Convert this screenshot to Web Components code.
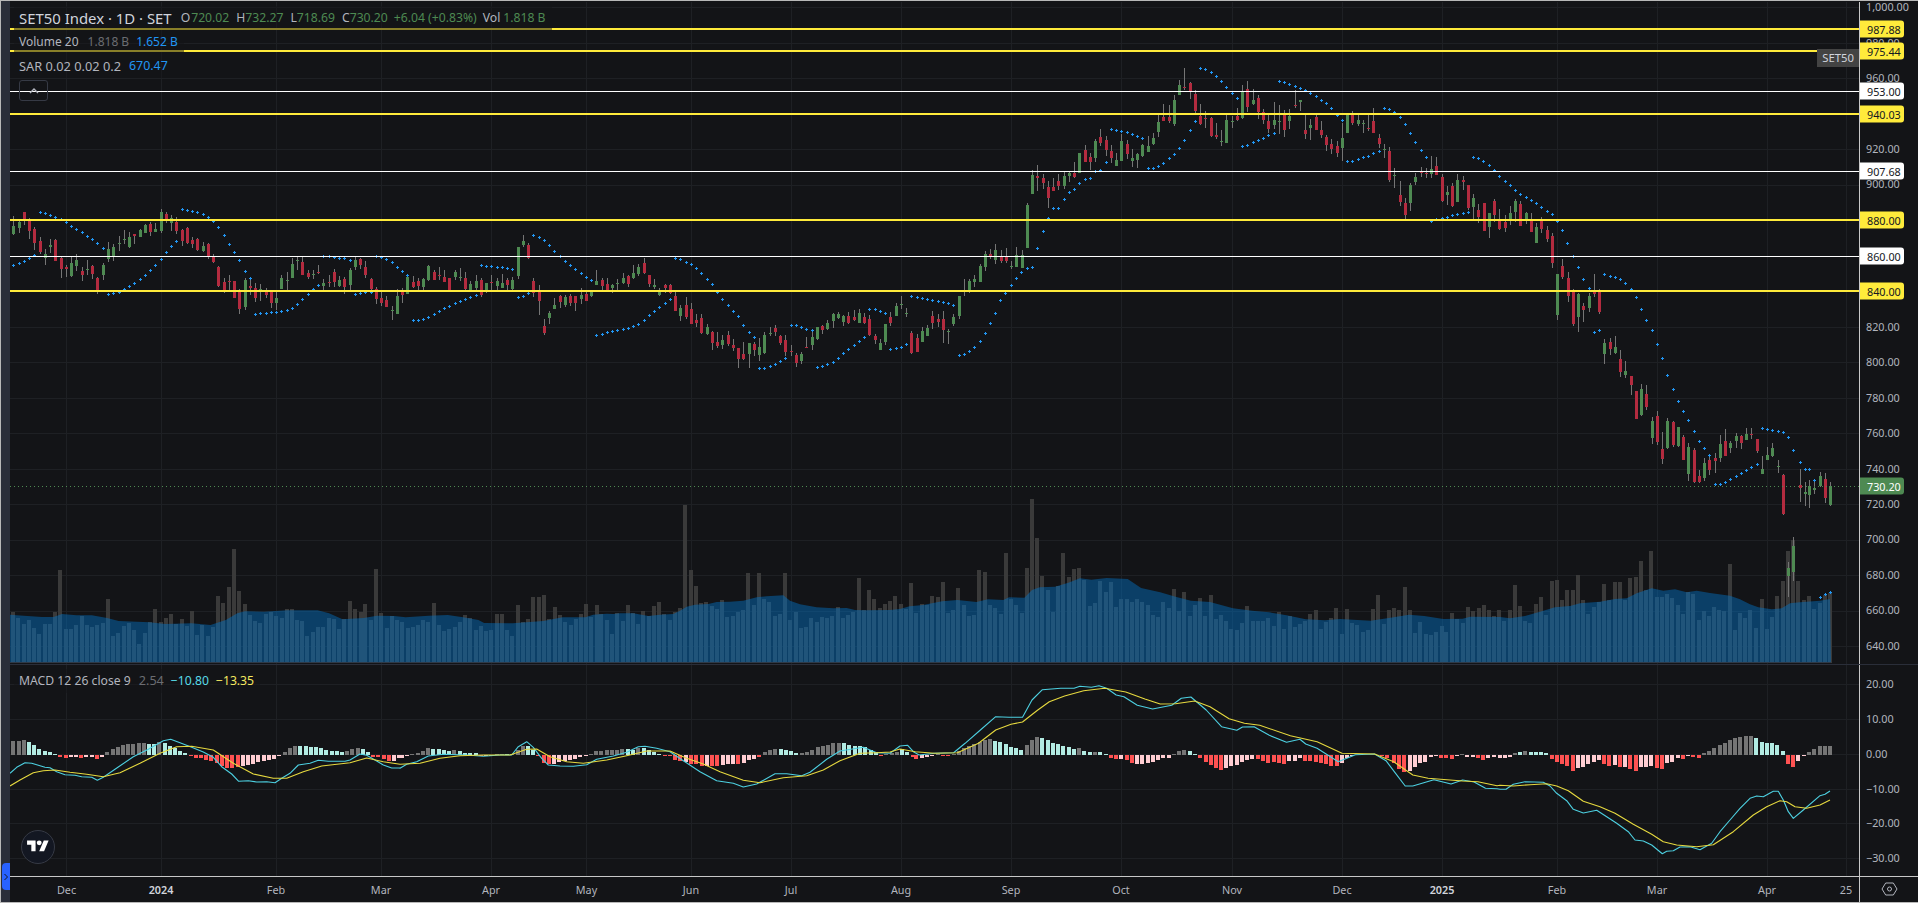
<!DOCTYPE html>
<html>
<head>
<meta charset="utf-8">
<title>SET50 Index</title>
<style>
  html, body { margin: 0; padding: 0; background: #131417; overflow: hidden; }
  body { font-family: "Noto Sans", sans-serif; }
</style>
</head>
<body>
<tv-chart>
  <tv-sidebar slot="side"></tv-sidebar>

  <tv-main-pane slot="main">
    <tv-legend>
      <tv-row>
        <tv-val tone="title" size="14.9">SET50 Index · 1D · SET</tv-val>
        <tv-val gap="9">O</tv-val><tv-val tone="green" gap="1">720.02</tv-val>
        <tv-val gap="7">H</tv-val><tv-val tone="green">732.27</tv-val>
        <tv-val gap="7">L</tv-val><tv-val tone="green">718.69</tv-val>
        <tv-val gap="7">C</tv-val><tv-val tone="green">730.20</tv-val>
        <tv-val gap="6" tone="green">+6.04 (+0.83%)</tv-val>
        <tv-val gap="6">Vol</tv-val><tv-val gap="3" tone="green">1.818 B</tv-val>
      </tv-row>
      <tv-row>
        <tv-val tone="label" size="12">Volume 20</tv-val>
        <tv-val gap="9" tone="grey" size="12">1.818 B</tv-val>
        <tv-val gap="7" tone="blue" size="12">1.652 B</tv-val>
      </tv-row>
      <tv-row>
        <tv-val tone="label" size="12.8">SAR 0.02 0.02 0.2</tv-val>
        <tv-val gap="8" tone="blue" size="12.4">670.47</tv-val>
      </tv-row>
      <tv-collapse></tv-collapse>
    </tv-legend>
  </tv-main-pane>

  <tv-price-scale slot="main-scale" top="2" height="662"></tv-price-scale>

  <tv-macd-pane slot="macd">
    <tv-legend>
      <tv-row>
        <tv-val tone="label">MACD 12 26 close 9</tv-val>
        <tv-val gap="8" tone="grey" size="12.6">2.54</tv-val>
        <tv-val gap="7" tone="teal">−10.80</tv-val>
        <tv-val gap="7" tone="yellow">−13.35</tv-val>
      </tv-row>
    </tv-legend>
    <tv-logo></tv-logo>
  </tv-macd-pane>

  <tv-price-scale slot="macd-scale" top="665" height="211" kind="macd"></tv-price-scale>

  <tv-time-scale slot="time"></tv-time-scale>
  <tv-scale-settings slot="corner"></tv-scale-settings>
</tv-chart>

<script>
const VLINES = [66.5, 161, 276, 381, 491, 586.5, 691, 791, 901, 1011, 1121, 1232, 1342, 1442, 1557, 1657, 1767, 1846];
const GRID_MAIN = [7, 43, 78, 114, 149, 185, 220, 256, 291, 327, 362, 398, 433, 469, 504, 540, 575, 611, 646];
const GRID_MACD = [684, 719, 754, 789, 823, 858];

// drawings on the price scale: [y, label, kind]
const HLINES = [
  [29, '987.88', 'y'], [51, '975.44', 'y'], [91, '953.00', 'w'], [114, '940.03', 'y'],
  [171, '907.68', 'w'], [220, '880.00', 'y'], [256, '860.00', 'w'], [291, '840.00', 'y']
];

// candles were read from crops: [left, top, scale, "colour x,wickTop,bodyTop,bodyBottom,wickBottom ..."]
const CANDLES = [
  [0, 180, 3, `g40,108,138,162,166 g58,120,125,144,158 r73,96,96,122,134 r88,115,122,152,177 r103,140,148,188,210 r121,170,183,216,222 g136,207,222,234,255 g151,177,195,201,220 r166,178,180,243,244 r184,232,234,267,294 r199,255,261,267,290 g214,230,249,287,291 g229,222,240,258,273 r247,262,273,285,303 g262,240,267,270,285 r277,256,258,282,297 r292,292,294,331,342 g310,250,255,285,300 g325,186,207,237,247 g340,193,201,229,243 g358,168,189,191,212 g373,151,177,179,192 g388,155,171,201,203 r403,162,162,168,192 g421,148,150,171,171 g436,132,135,159,160 r451,126,132,156,167 g466,128,147,156,157 g484,87,96,153,158 r499,95,102,120,128 g514,105,114,129,153 r529,112,126,153,162 r547,147,150,183,198 r562,141,144,189,192 r577,170,180,192,204 r592,173,177,210,212 g610,186,198,213,216 r625,189,192,229,237 r640,222,228,246,249 r655,258,261,318,321 r673,294,306,333,339 r688,285,303,306,334 r703,303,303,354,354 r718,327,330,387,402 g736,295,300,381,390 r751,291,318,324,345 r766,309,324,354,366 g781,312,326,329,363 r799,324,333,345,354 r814,333,335,369,384 g829,333,354,369,390 g844,285,294,327,327 g862,276,300,303,330 g877,234,252,294,294 g892,228,240,243,270 r907,228,246,285,285 r925,270,279,291,297 g940,270,282,285,297 r955,255,276,279,282 g970,297,309,318,330 r988,285,306,309,321 r1003,267,276,306,321 g1018,288,300,318,321 r1033,291,297,321,342 g1051,264,270,315,330 g1066,228,240,261,270 r1081,234,237,255,267 r1096,243,261,285,294 r1114,294,297,327,330 r1129,321,327,357,372 r1144,333,354,369,378 r1159,348,360,381,381 g1177,378,390,393,420 g1192,327,348,402,402 r1207,324,333,345,369 g1222,288,291,342,342 r1240,288,306,321,324 r1255,294,303,318,336 g1270,294,297,321,330 g1285,255,258,299,303 r1303,270,276,300,300 r1318,261,285,288,300 r1333,270,291,306,306 r1348,294,294,330,333 g1366,270,276,291,300 g1381,264,291,294,303 r1396,276,294,327,330 g1411,303,312,330,336 g1429,285,303,324,330 r1444,294,300,345,351 g1459,309,309,336,339 r1474,285,306,309,330 g1492,294,303,318,330`],
  [500, 180, 3, `g7,282,309,324,324 r22,294,300,315,333 g37,291,300,327,333 g55,201,201,288,297 g70,165,183,195,201 r85,189,195,234,237 r100,294,303,339,351 r118,315,333,363,405 r133,417,438,459,465 g148,393,399,414,432 g163,354,375,387,387 r181,345,348,366,384 g196,345,351,375,380 r211,342,348,369,378 r226,348,348,369,393 g244,324,345,357,372 r259,330,342,363,363 g274,330,333,348,351 g289,270,303,315,315 r307,294,300,318,333 r322,294,312,330,333 g337,312,315,324,339 g352,297,309,312,333 g370,279,294,309,312 r385,285,288,312,321 g400,255,279,294,297 g415,252,261,282,288 r433,234,249,279,282 r448,285,285,312,321 g463,297,315,321,327 g478,324,333,345,348 r496,312,315,324,339 r511,312,315,339,342 r526,333,348,393,393 g541,375,384,408,423 r559,351,375,411,417 r574,369,387,432,432 r589,402,420,429,441 r604,402,414,459,462 g622,432,441,462,465 r637,453,456,489,510 r652,456,486,498,504 g667,465,480,495,507 r685,453,465,492,498 r700,477,495,504,513 r715,504,504,537,564 r730,486,522,537,540 g748,489,489,522,564 r763,486,492,510,528 g778,474,501,525,543 g793,456,465,519,522 g811,441,459,462,468 r826,435,444,456,468 r841,465,468,489,495 r856,465,480,516,528 r874,495,513,516,528 r889,519,525,549,561 g904,516,522,543,552 r919,471,501,504,504 g937,456,471,495,510 g952,441,441,477,480 r967,435,438,450,462 g982,420,429,447,450 g1000,399,402,423,444 g1015,396,402,414,417 g1030,405,408,426,438 r1045,396,408,429,432 r1063,390,411,420,423 g1078,387,399,429,429 r1093,399,411,429,432 r1108,405,417,465,468 r1126,462,468,480,492 g1141,477,489,510,510 g1156,432,432,486,495 r1171,396,411,429,438 g1189,369,378,408,408 g1204,348,372,375,387 g1219,384,399,402,411 r1234,453,459,519,522 r1252,462,474,516,516 g1267,441,453,486,486 g1282,435,444,468,468 r1297,393,408,429,447 r1315,402,417,426,441 r1330,393,417,450,489 g1345,447,453,456,492 g1360,402,411,432,438 g1378,348,348,408,417 g1393,297,330,333,348 g1408,297,303,336,339 g1423,285,297,306,321 g1441,252,258,306,306 g1456,213,222,261,273 r1471,207,222,231,237 g1486,192,210,240,252`],
  [950, 50, 3, `r154,600,621,633,640 r169,594,621,633,640 g184,633,648,651,657 g199,591,615,651,651 g217,600,615,654,654 g232,460,465,594,594 g247,360,375,432,432 r262,345,378,384,423 r280,372,384,400,417 r295,393,411,444,474 r310,384,411,423,423 r325,372,393,408,420 g343,366,378,408,417 g358,363,369,378,396 r373,336,369,381,384 g388,309,309,369,369 r406,285,300,336,336 r421,309,321,336,360 g436,267,273,324,336 r451,237,261,279,288 r469,258,270,300,318 r484,285,303,324,339 g499,309,330,348,348 g514,252,273,333,333 r532,270,282,312,327 g547,297,324,333,351 g562,309,312,330,354 g577,282,285,318,321 g595,258,288,306,306 g610,249,264,282,285 g625,189,216,246,261 r640,162,201,213,213 r658,165,201,213,219 g673,135,150,222,228 g688,90,105,135,135 r703,54,111,114,120 r721,96,99,123,147 r736,120,132,183,195 r751,162,198,222,225 r766,183,204,207,234 r784,201,204,258,261 r799,219,255,261,267 g814,240,273,276,288 g829,192,210,279,279 g847,198,213,216,234 r862,174,198,210,213 g877,105,126,204,207 r892,93,117,171,186 g910,117,150,162,165 r925,135,144,186,207 r940,177,186,210,222 r955,192,213,237,249 g973,156,210,225,237 g988,165,213,216,252 r1003,180,192,240,261 g1018,177,198,213,237 r1036,120,165,168,174 g1051,150,150,156,183 r1066,192,240,252,267 g1081,207,225,234,270 r1099,189,201,240,240 r1114,213,240,255,264 r1129,255,261,285,303 r1144,267,282,297,312 r1162,273,288,309,321 g1177,219,264,294,333 g1192,189,192,249,249 r1207,183,195,219,225 g1225,192,210,222,228 g1240,210,219,222,249 r1255,192,234,237,243 r1270,174,213,249,249 r1288,252,264,282,294 g1303,282,297,300,324 r1318,291,303,390,396 g1333,354,375,378,414 r1351,393,435,456,468 r1366,444,459,495,510 g1381,399,405,459,483 g1396,369,381,396,405 r1414,351,366,369,381 r1429,354,369,372,384 g1444,318,357,372,384 r1459,321,348,375,375 r1477,372,381,453,456 g1492,408,426,435,465`],
  [1440, 170, 3, `r37,39,48,108,111 g52,12,30,96,96 r70,18,30,36,60 r85,45,45,114,120 g100,72,84,111,150 r115,102,120,141,159 r133,99,99,183,183 g148,129,129,171,204 r163,87,93,135,156 r178,117,150,177,180 r196,135,156,174,186 g211,108,129,150,165 g226,87,93,126,156 r241,93,102,168,168 g259,126,129,147,162 r274,129,150,186,186 g289,159,171,219,219 r304,141,147,177,189 r322,168,180,207,216 r337,189,198,279,294`],
  [1500, 250, 3, `g172,72,72,195,210 r187,27,48,81,87 r205,66,84,138,156 r220,117,123,222,228 g235,129,132,201,246 r250,159,168,180,216 g268,129,138,174,186 r283,72,120,132,141 r298,117,120,186,192 g313,267,279,312,342 r331,264,276,297,315 g346,258,291,309,312 r361,300,327,366,381 g376,333,363,375,384 r394,378,378,405,435 r409,423,423,507,507 g424,402,417,495,498 r439,405,432,471,480 g457,501,513,564,582 r472,483,498,576,585 r487,546,597,627,642 g502,504,513,594,597 r520,513,516,585,591 g535,531,531,588,591 r550,555,561,630,630 g565,579,591,672,693 r583,594,600,696,699 r598,660,678,696,699 g613,624,639,684,693 r628,615,630,660,675 r646,609,624,633,669 g661,555,582,624,636 r676,537,573,618,618 g691,573,579,594,609 g709,549,558,573,594 r724,555,558,579,597 g739,534,552,570,570 r754,534,552,555,567 r772,567,567,603,609 g787,618,657,672,672 g802,591,615,630,630 g817,579,594,618,621 g835,630,648,651,669 r850,672,675,792,795`],
  [1788.3, 0, 1, `g0,562,568,576,597 g5,537,546,572,581`],
  [1500, 250, 3, `r899,657,705,714,756 g914,696,726,732,768 g928,690,708,735,774 g943,690,714,720,732 g961,666,678,708,711 r976,669,687,744,759 g991,696,708,765,768`]
];

// parabolic sar: [left, top, scale, "x,y x,y ..."]
const SAR = [
  [0, 180, 3, `40,256 58,250 73,244 88,235 103,226 121,97 136,100 151,106 166,112 184,118 199,127 214,139 229,148 247,157 262,169 277,178 292,190 310,205 325,343 340,340 358,337 373,328 388,319 403,310 421,298 436,286 451,271 466,256 484,238 499,217 514,199 529,184 547,88 562,91 577,94 592,97 610,103 625,112 640,124 655,142 673,166 688,193 703,217 718,241 736,274 751,295 766,403 781,400 799,400 814,397 829,397 844,394 862,391 877,385 892,373 907,358 925,343 940,328 955,316 970,229 988,229 1003,232 1018,235 1033,235 1051,241 1066,343 1081,340 1096,337 1114,337 1129,229 1144,232 1159,238 1177,247 1192,262 1207,274 1222,286 1240,421 1255,421 1270,418 1285,412 1303,403 1318,394 1333,385 1348,379 1366,370 1381,364 1396,358 1411,352 1429,346 1444,256 1459,259 1474,259 1492,262`],
  [500, 180, 3, `7,262 22,265 37,268 55,352 70,349 85,340 100,166 118,172 133,181 148,196 163,214 181,229 196,244 211,256 226,268 244,280 259,292 274,301 289,466 307,463 322,457 337,454 352,451 370,448 385,445 400,439 415,433 433,421 448,406 463,394 478,382 496,370 511,358 526,235 541,238 559,247 574,253 589,265 604,280 622,298 637,313 652,337 667,358 685,376 700,394 715,409 730,436 748,457 763,472 778,565 793,565 811,559 826,553 841,544 856,535 874,436 889,436 904,442 919,448 937,451 952,562 967,559 982,553 1000,547 1015,535 1030,520 1045,508 1063,496 1078,484 1093,472 1108,388 1126,388 1141,394 1156,400 1171,508 1189,505 1204,502 1219,493 1234,349 1252,352 1267,355 1282,358 1297,361 1315,364 1330,367 1345,370 1360,376 1378,526 1393,523 1408,514 1423,502 1441,484 1456,460 1471,430 1486,400`],
  [0, 0, 1, `1000,300 1005,293 1011,285 1016,278 1021,272`],
  [950, 50, 3, `232,655 247,652 262,595 280,544 295,505 310,475 325,475 343,448 358,427 373,418 388,400 406,388 421,385 436,364 451,361 469,337 484,238 499,241 514,244 532,247 547,253 562,259 577,265 595,355 610,355 625,349 640,340 658,325 673,313 688,295 703,271 721,241 736,214 751,55 766,58 784,67 799,79 814,94 829,112 847,130 862,145 877,289 892,286 910,277 925,271 940,265 955,256 973,250 988,94 1003,97 1018,103 1036,109 1051,115 1066,121 1081,130 1099,139 1114,151 1129,160 1144,175 1162,195 1177,211 1192,334 1207,334 1225,328 1240,322 1255,319 1270,310 1288,304 1303,175 1318,178 1333,187 1351,202 1366,223 1381,250 1396,277 1414,301 1429,322 1444,514 1459,507 1477,505 1492,502`],
  [1440, 170, 3, `37,136 52,133 70,130 85,127`],
  [0, 0, 1, `1473,157 1478,158 1483,161 1489,165`],
  [1440, 170, 3, `163,0 178,19 196,34 211,46 226,61 241,73 259,82 274,91 289,100 304,112 322,124 337,133 352,154`],
  [0, 0, 1, `1562,230 1567,243`],
  [1500, 250, 3, `220,18 235,52 250,88 268,115 283,247 298,241 313,73 331,79 346,82 361,88 376,100 394,118 409,142 424,178 439,211 457,241 472,283 487,325 502,376 520,418 535,454 550,484 565,511 583,544 598,574 613,595 628,616 646,703 661,703 676,697 691,688 709,679 724,670 739,661 754,652 772,643 787,535 802,538 817,541 835,544 850,547 865,562 880,601 899,637 914,658 928,658 943,691`],
  [1500, 550, 3, `961,142 976,133 991,127`]
];

// volume tops: [left, top, scaleX, scaleY, "x,y ..."]
const VOLUME = [
  [0, 480, 2.613, 3, `34,396 48,414 62,432 76,420 89,444 103,462 117,432 131,432 144,396 158,270 172,447 186,447 199,435 213,408 227,435 240,441 254,435 268,429 282,357 296,468 309,459 324,438 337,429 351,450 364,492 379,459 392,426 405,387 420,426 434,414 447,402 461,432 475,417 488,438 502,393 515,465 529,435 543,468 556,441 570,348 584,369 598,321 612,207 625,333 639,372 653,405 667,423 680,429 694,402 708,396 722,408 736,414 749,387 763,387 776,420 790,423 803,468 818,456 832,441 845,441 859,414 873,417 886,447 900,417 914,363 928,387 942,396 955,372 969,420 983,267 996,399 1010,444 1024,408 1038,420 1051,426 1065,444 1079,441 1092,435 1106,420 1119,426 1133,369 1147,435 1161,453 1174,447 1188,441 1202,426 1216,405 1229,414 1243,450 1257,438 1270,453 1284,450 1298,402 1312,402 1325,450 1339,468 1353,375 1367,426 1380,417 1394,351 1408,351 1422,345 1435,417 1449,381 1463,405 1477,426 1491,435 1504,417 1518,402 1532,372 1545,411 1559,375`],
  [400, 490, 3, 3, `603,372 620,390 636,432 652,368 668,392 684,345 700,368 714,402 730,363 746,378 762,348 777,336 793,372 809,390 825,366 840,354 856,45 873,240 888,288 903,340 919,336 935,348 951,357 966,330 982,381 998,378 1014,366 1030,360 1045,249 1061,345 1077,249 1092,327 1108,336 1124,378 1140,372 1155,249 1171,390 1187,366 1203,414 1219,411 1234,384 1250,396 1266,381 1281,384 1297,378 1313,351 1329,384 1344,375 1360,366 1377,264 1392,360 1407,300 1423,327 1439,354 1455,342 1470,333 1486,318 1503,342`],
  [900, 480, 2.613, 3, `15,387 29,309 43,399 57,372 71,375 84,348 98,351 112,306 125,399 139,390 152,324 166,375 180,408 194,405 207,270 221,276 235,375 249,384 263,402 277,219 290,357 304,375 318,399 332,264 345,57 358,174 372,288 386,330 400,396 413,318 427,219 441,291 455,267 468,264 482,300 496,378 510,369 523,303 537,336 551,306 564,381 578,357 592,357 606,366 620,357 633,366 647,375 660,405 674,411 688,366 702,385 716,327 730,393 743,336 757,408 771,375 784,354 798,408 812,345 826,417 840,405 853,423 866,447 880,450 894,429 908,378 922,423 935,423 949,423 962,414 976,438 990,396 1004,447 1018,408 1031,441 1045,432 1059,423 1072,402 1086,390 1100,447 1113,426 1127,414 1140,384 1154,462 1168,387 1182,429 1195,435 1209,456 1223,450 1237,387 1250,345 1264,432 1278,390 1291,384 1305,390 1319,321 1333,390 1346,459 1360,426 1374,462 1388,465 1401,456 1415,438 1428,456 1442,399 1456,417 1470,429 1484,381 1498,393 1512,384 1525,375 1539,390 1553,408 1565,390`],
  [1500, 550, 3, 3, `12,213 30,180 45,105 60,168 75,213 90,220 108,162 123,141 138,195 156,93 171,90 186,150 201,120 219,120 234,75 249,150 264,192 282,171 297,156 312,102 327,150 345,96 360,96 375,150 390,84 408,81 423,33 438,120 453,3 471,141 486,141 501,132 516,144 534,165 549,192 564,126 579,132 597,210 612,183 627,198 642,171 657,180 672,183 690,42 705,240 720,189 735,204 750,180 768,234 786,147 801,237 816,201 831,138 849,93 864,3 879,-30 894,93 912,150 927,138 942,177 960,159 975,135 990,128`]
];

const VOL_MA = [
  [0, 480, 2.613, 3, `26,404 62,407 110,411 140,411 162,402 200,406 240,406 280,414 310,423 390,427 432,432 500,430 550,435 590,420 620,400 640,394 690,395 750,391 830,391 860,400 895,418 950,414 985,407 1030,408 1060,412 1120,407 1170,405 1210,412 1250,420 1265,429 1340,430 1420,423 1470,412 1530,412 1550,404`],
  [400, 490, 3, 3, `620,371 640,372 660,370 700,370 745,378 780,374 820,372 840,362 860,350 885,344 925,342 950,336 990,335 1030,332 1070,322 1100,319 1150,316 1170,332 1200,343 1250,352 1300,355 1340,354 1365,360 1395,361 1470,360`],
  [900, 480, 2.613, 3, `0,387 25,379 60,375 110,364 150,360 200,366 230,358 270,360 285,352 325,353 345,330 365,322 405,320 440,308 470,295 500,299 540,294 595,297 630,324 680,337 720,350 760,362 810,366 870,385 920,392 965,397 1010,406 1060,418 1110,421 1150,417 1230,422 1290,412 1330,404 1370,408 1420,417 1470,416 1490,410 1560,411`],
  [1500, 550, 3, 3, `0,201 30,205 75,198 120,185 165,172 210,168 240,160 300,155 345,147 380,145 410,130 455,115 490,122 525,118 560,127 590,122 630,129 690,137 720,148 750,163 775,172 815,178 845,175 870,160 900,157 960,152 990,147`]
];

// macd histogram: [left, scaleX, scaleY, "colour x,height ..."]  g grey, t teal, r red, p pink
const HIST = [
  [0, 3, 3, `g40,43 g56,43 g72,45 t87,39 t103,29 t118,18 t134,12 t150,8 t165,3 r181,-7 r197,-8 p212,-6 p228,-7 r243,-8 p259,-6 p275,-7 r291,-13 p306,-6 g322,8 g338,18 g353,23 g369,30 g385,33 g400,33 g416,36 g431,36 t447,34 t463,34 g478,38 t494,35 t510,28 t525,20 t541,12 t556,6 r572,-3 r588,-8 r603,-10 r619,-15 r634,-18 r650,-25 r666,-33 r681,-38 r697,-40 r713,-37 p729,-33 p744,-30 p760,-26 p775,-22 p791,-17 p807,-16 p823,-12 p838,-4 g854,8 g870,20 g885,27 t901,27 t917,26 t932,25 t948,24 t963,20 t979,16 t995,13 t1010,12 t1026,10 g1042,13 g1057,17 g1073,21 t1088,19 t1104,10 r1120,-5 r1135,-7 r1151,-13 r1167,-17 p1182,-18 p1198,-10`],
  [400, 3, 3, `p7,-10 p21,-3 g37,3 g53,6 g70,12 g85,21 t100,18 t116,19 t132,14 t148,11 g163,14 t180,11 t195,7 t211,5 t227,5 r243,-3 p258,-3 p273,-2 g290,2 g305,3 t321,2 g337,3 g353,15 g369,26 t385,27 t400,14 r415,-4 r432,-25 r447,-28 p463,-28 p478,-22 p494,-19 p510,-15 p525,-12 p541,-6 p557,-4 g573,1 g589,12 g604,13 g620,15 g636,15 g652,15 g667,18 t683,18 t699,16 g715,22 t731,22 t747,15 t762,9 t778,3 r794,-3 r810,-3 r826,-14 r841,-17 p857,-21 r873,-27 r889,-28 r905,-32 p920,-32 r936,-33 r952,-33 p968,-30 p984,-27 p1000,-26 r1015,-26 p1031,-24 p1047,-16 p1063,-12 r1078,-6 g1094,9 g1110,14 g1126,18 t1142,18 t1158,14 t1174,12 t1189,6 g1205,5 g1221,9 g1237,15 g1253,24 g1269,27 g1285,30 g1300,36 g1316,36 t1332,36 t1348,30 t1364,27 t1380,27 t1395,24 t1412,15 t1428,9 r1443,-3 g1459,3 g1475,5 g1490,9 t1506,17 t1522,10 r1538,-6`],
  [900, 2.613, 3, `r43,-11 p57,-8 p71,-5 p84,-3 g98,1 r112,-2 r125,-2 g140,3 g153,12 g167,22 g181,27 g194,33 g208,40 g222,45 g235,47 t248,43 t262,38 t276,33 t290,24 t303,21 t317,14 g331,30 g345,46 g358,54 t372,52 t386,44 t400,37 t413,32 t427,26 t441,24 t455,18 g468,21 t482,13 t496,10 g510,9 t523,9 t537,4 r551,-8 r564,-13 p578,-13 r592,-14 r606,-23 p620,-26 p633,-27 p647,-25 p660,-22 p674,-14 p688,-8 p702,-8 g716,3 g730,11 g743,14 t757,12 t771,3 r785,-10 r799,-20 r812,-31 r826,-38 r839,-45 p853,-38 p866,-34 p880,-29 p894,-20 p908,-14 p921,-12 r935,-11 r949,-17 r962,-23 r976,-22 r990,-23 r1003,-27 p1017,-19 p1031,-17 p1045,-9 r1058,-17 r1072,-17 r1086,-20 r1100,-23 r1113,-27 r1127,-32 r1141,-32 p1154,-24 p1168,-8 p1181,-3 r1260,-4 r1273,-10 r1290,-25 r1305,-42 r1318,-52 p1332,-47 p1346,-35 p1359,-23 p1373,-20 p1387,-6 p1400,-3 r1414,-8 r1428,-9 r1442,-13 p1455,-4 g1469,3 p1482,-5 p1496,-5 r1510,-8 r1524,-16 p1537,-8 p1551,-7`],
  [1500, 3, 3, `p0,-10 p15,-10 p30,-5 g45,7 t60,9 g75,11 t93,9 t108,8 t123,8 t138,5 r156,-11 r171,-20 r186,-26 r201,-32 r219,-47 p234,-40 p249,-37 p264,-28 p282,-20 p297,-15 r312,-26 r327,-32 p345,-29 r360,-35 p375,-37 r390,-43 r408,-47 p423,-37 p438,-35 p453,-34 r471,-38 r486,-42 p501,-25 p516,-21 p534,-8 r549,-11 p564,-2 r579,-7 r597,-10 g612,5 g627,12 g642,20 g660,30 g675,35 g690,46 g705,52 g720,54 g738,57 g753,58 t768,52 t786,40 t801,37 t816,36 t831,31 t849,11 r864,-27 r879,-36 p894,-19 p912,-4 g927,10 g942,17 g960,26 g975,26 g990,28`]
];

const MACD_LINE = [
  [0, 650, 3, 3, `30,370 50,352 75,338 95,340 135,352 150,353 170,365 195,374 225,376 245,380 275,382 292,391 310,382 345,358 400,320 445,298 490,272 512,268 540,278 575,292 610,306 640,322 665,350 695,372 716,394 745,392 770,396 800,395 825,398 845,385 870,370 895,345 930,340 955,331 985,334 1035,334 1050,330 1080,312 1100,316 1125,330 1150,345 1175,354 1200,354`],
  [400, 490, 3, 3, `0,835 20,823 50,815 85,798 130,793 200,795 250,799 300,795 335,795 355,770 380,755 400,772 425,805 445,825 480,828 520,829 560,824 590,808 640,798 680,787 715,770 735,769 770,775 810,785 850,812 900,845 950,872 1000,880 1030,891 1070,882 1125,851 1160,851 1205,857 1230,847 1280,808 1320,783 1390,772 1430,788 1470,790`],
  [900, 480, 2.613, 3, `0,798 20,796 35,815 50,825 90,820 140,818 170,790 210,750 250,710 285,712 320,712 345,660 372,629 420,625 455,625 470,619 500,622 520,617 540,625 565,645 585,650 620,676 660,687 710,676 735,655 760,651 800,690 840,740 880,751 895,741 925,740 965,766 1010,787 1045,778 1060,792 1090,805 1145,845 1190,824 1240,822 1270,842 1295,880 1320,918 1340,918 1395,899 1440,912 1470,900 1500,906 1530,925 1560,926`],
  [1500, 550, 3, 3, `0,718 18,718 40,703 75,695 130,697 150,708 170,730 200,752 220,778 250,789 290,781 320,800 350,820 385,845 405,870 430,873 455,885 487,911 500,904 520,902 540,891 570,890 600,899 635,880 660,845 690,810 720,775 750,745 770,738 790,740 820,724 835,724 850,750 865,785 880,805 910,780 960,737 975,733 990,723`]
];

const SIGNAL_LINE = [
  [0, 650, 3, 3, `30,408 60,390 100,368 130,362 165,360 210,367 260,373 310,380 360,368 420,340 480,310 530,290 575,289 640,300 700,340 760,372 820,385 860,385 910,365 965,348 1050,338 1100,324 1150,335 1200,343`],
  [400, 490, 3, 3, `0,823 60,820 120,805 180,797 250,795 330,795 380,778 410,777 450,800 500,815 550,820 620,810 680,797 740,783 810,783 860,805 910,822 960,845 1030,871 1080,878 1150,863 1220,857 1270,840 1320,812 1380,790 1430,788 1470,786`],
  [900, 480, 2.613, 3, `0,807 40,815 90,820 150,818 205,790 250,750 290,733 320,726 360,690 390,665 430,648 480,632 535,625 590,636 640,657 680,672 720,671 770,663 810,680 860,716 900,730 940,736 1020,767 1090,785 1155,820 1240,822 1290,845 1340,885 1380,895 1470,903 1510,905 1560,917`],
  [1500, 550, 3, 3, `0,706 40,708 90,704 140,701 170,708 205,722 250,754 300,770 345,790 400,823 455,853 490,875 530,885 590,890 640,884 700,845 760,795 800,770 840,752 860,755 885,770 920,775 960,765 990,750`]
];

const UP = '#4e8a52', DOWN = '#b32b3f', WICK = '#757575';
const HIST_COLORS = { g: '#757575', t: '#b2ebe2', r: '#ff5252', p: '#ffcdd2' };

function readPoints(sections) {
  const out = [];
  for (const [ox, oy, sx, sy, str] of sections) {
    for (const p of str.trim().split(/\s+/)) {
      const [a, b] = p.split(',').map(Number);
      out.push([ox + a / sx, oy + b / sy]);
    }
  }
  return out;
}

function gridSvg(x0, hs, y0, y1) {
  let s = '';
  for (const y of hs) s += `<rect x="10" y="${y}" width="1849" height="1" fill="#1e2024"/>`;
  for (const x of VLINES) s += `<rect x="${Math.floor(x)}" y="${y0}" width="1" height="${y1 - y0}" fill="#1e2024"/>`;
  return s;
}

function candlesSvg() {
  let s = '';
  for (const [ox, oy, k, str] of CANDLES) {
    for (const item of str.trim().split(/\s+/)) {
      const col = item[0] == 'g' ? UP : DOWN;
      const [xv, wt, bt, bb, wb] = item.slice(1).split(',').map(Number);
      const x = Math.round(ox + xv / k);
      const y = v => Math.round(oy + v / k);
      s += `<rect x="${x}" y="${y(wt)}" width="1" height="${Math.max(1, y(wb) - y(wt))}" fill="${WICK}"/>`;
      s += `<rect x="${x - 1}" y="${y(bt)}" width="3" height="${Math.max(1, y(bb) - y(bt))}" fill="${col}"/>`;
    }
  }
  return s;
}

function sarSvg() {
  let s = '';
  for (const [ox, oy, k, str] of SAR) {
    for (const p of str.trim().split(/\s+/)) {
      const [a, b] = p.split(',').map(Number);
      const x = Math.round(ox + a / k), y = Math.round(oy + b / k);
      s += `<path d="M${x - 1} ${y}h3v1h-3zM${x} ${y - 1}h1v3h-1z" fill="#2196f3"/>`;
    }
  }
  return s;
}

function volumeSvg() {
  let s = '';
  for (const [x, y] of readPoints(VOLUME)) {
    const px = Math.round(x), top = Math.round(y);
    s += `<rect x="${px - 2}" y="${top}" width="4" height="${663 - top}" fill="#3a3a3a"/>`;
  }
  const ma = readPoints(VOL_MA);
  const d = ma.map(p => p[0].toFixed(1) + ' ' + p[1].toFixed(1)).join(' L');
  s += `<path shape-rendering="auto" d="M10 663 L10 ${ma[0][1].toFixed(1)} L${d} L1831 663 Z" fill="rgba(2,115,199,.46)"/>`;
  s += `<rect x="10" y="662" width="1821" height="1" fill="#2f3a48"/>`;
  return s;
}

function histSvg() {
  let s = '';
  for (const [ox, sx, sy, str] of HIST) {
    for (const item of str.trim().split(/\s+/)) {
      const [a, h] = item.slice(1).split(',').map(Number);
      const x = Math.round(ox + a / sx) - 2;
      const px = Math.max(1, Math.round(Math.abs(h) / sy));
      const y = h > 0 ? 755 - px : 755;
      s += `<rect x="${x}" y="${y}" width="4" height="${px}" fill="${HIST_COLORS[item[0]]}"/>`;
    }
  }
  return s;
}

function lineSvg(sections, color) {
  const pts = readPoints(sections).map(p => p[0].toFixed(1) + ',' + p[1].toFixed(1)).join(' ');
  return `<polyline shape-rendering="auto" points="${pts}" fill="none" stroke="${color}" stroke-width="1.1" stroke-linejoin="round"/>`;
}

class TvChart extends HTMLElement {
  constructor() {
    super();
    this.attachShadow({ mode: 'open' });
    this.shadowRoot.innerHTML = `
      <style>
        :host { display: flex; width: 1918px; height: 903px; box-sizing: border-box; background: #131417;
                border-top: 1px solid #b8b8b8; border-bottom: 1px solid #b8b8b8; border-left: 1px solid #b8b8b8; }
        .body { flex: 1; display: flex; flex-direction: column; min-width: 0; padding-top: 1px; }
        .row { display: flex; }
        .r1 { height: 662px; }
        .sep { height: 1px; background: #2a2e39; }
        .r2 { height: 211px; }
        .r3 { height: 26px; border-top: 1px solid #c8c8c8; }
      </style>
      <slot name="side"></slot>
      <div class="body">
        <div class="row r1"><slot name="main"></slot><slot name="main-scale"></slot></div>
        <div class="sep"></div>
        <div class="row r2"><slot name="macd"></slot><slot name="macd-scale"></slot></div>
        <div class="row r3"><slot name="time"></slot><slot name="corner"></slot></div>
      </div>`;
  }
}

class TvSidebar extends HTMLElement {
  constructor() {
    super();
    this.attachShadow({ mode: 'open' });
    this.shadowRoot.innerHTML = `
      <style>
        :host { display: flex; flex-direction: column; justify-content: flex-end; align-items: flex-end;
                width: 9px; background: #2a2e39; padding-bottom: 12px; box-sizing: border-box; }
        .tab { width: 8px; height: 27px; background: #2962ff; border-radius: 4px 0 0 4px; display: flex;
               align-items: center; justify-content: center; }
      </style>
      <div class="tab"><svg width="6" height="8" viewBox="0 0 6 8"><path d="M1.5 1l3 3-3 3" fill="none" stroke="#131722" stroke-width="1"/></svg></div>`;
  }
}

class TvMainPane extends HTMLElement {
  constructor() {
    super();
    this.attachShadow({ mode: 'open' });
  }
  connectedCallback() {
    let lines = '';
    for (const [y, , kind] of HLINES) {
      lines += kind == 'y'
        ? `<rect x="10" y="${y - 1}" width="1849" height="2" fill="#ffeb3b"/>`
        : `<rect x="10" y="${y}" width="1849" height="1" fill="#ffffff"/>`;
    }
    this.shadowRoot.innerHTML = `
      <style>
        :host { display: block; position: relative; width: 1849px; height: 662px; overflow: hidden; }
        svg { display: block; }
      </style>
      <svg width="1849" height="662" viewBox="10 2 1849 662" shape-rendering="crispEdges">
        ${gridSvg(10, GRID_MAIN, 2, 664)}
        ${volumeSvg()}
        ${candlesSvg()}
        ${sarSvg()}
        <line x1="10" y1="486.5" x2="1859" y2="486.5" stroke="#4e8a52" stroke-width="1" stroke-dasharray="1 3"/>
        ${lines}
      </svg>
      <slot></slot>`;
  }
}

class TvMacdPane extends HTMLElement {
  constructor() {
    super();
    this.attachShadow({ mode: 'open' });
  }
  connectedCallback() {
    this.shadowRoot.innerHTML = `
      <style>
        :host { display: block; position: relative; width: 1849px; height: 211px; overflow: hidden; }
        svg { display: block; }
      </style>
      <svg width="1849" height="211" viewBox="10 665 1849 211" shape-rendering="crispEdges">
        ${gridSvg(10, GRID_MACD, 665, 876)}
        ${histSvg()}
        ${lineSvg(MACD_LINE, '#4dd0e1')}
        ${lineSvg(SIGNAL_LINE, '#e6d93f')}
      </svg>
      <slot></slot>`;
  }
}

class TvLegend extends HTMLElement {
  constructor() {
    super();
    this.attachShadow({ mode: 'open' });
    this.shadowRoot.innerHTML = `
      <style>
        :host { position: absolute; top: 4px; left: 4px; display: flex; flex-direction: column; align-items: flex-start; }
      </style>
      <slot></slot>`;
  }
}

class TvRow extends HTMLElement {
  constructor() {
    super();
    this.attachShadow({ mode: 'open' });
    this.shadowRoot.innerHTML = `
      <style>
        :host { display: flex; align-items: center; height: 24px; padding: 0 6px 0 5px; box-sizing: border-box;
                background: rgba(19, 20, 23, .5); font: 12.2px/18px "Noto Sans", sans-serif; color: #b2b5be; white-space: nowrap; }
      </style>
      <slot></slot>`;
  }
}

class TvVal extends HTMLElement {
  constructor() {
    super();
    this.attachShadow({ mode: 'open' });
    const tones = { title: '#d1d4dc', label: '#b2b5be', green: '#4e8a52', grey: '#6b6d72', blue: '#2196f3', teal: '#58dbe8', yellow: '#f5e960' };
    const tone = this.getAttribute('tone');
    const gap = this.getAttribute('gap') || 0;
    const size = this.getAttribute('size');
    this.shadowRoot.innerHTML = `
      <style>
        :host { display: inline-block; margin-left: ${gap}px; color: ${tones[tone] || '#b2b5be'}; ${size ? `font-size: ${size}px;` : ''} }
      </style>
      <slot></slot>`;
  }
}

class TvCollapse extends HTMLElement {
  constructor() {
    super();
    this.attachShadow({ mode: 'open' });
    this.shadowRoot.innerHTML = `
      <style>
        :host { display: flex; align-items: center; justify-content: center; width: 29px; height: 21px; margin: 2px 0 0 5px;
                box-sizing: border-box; border: 1px solid #363a45; border-radius: 3px; }
      </style>
      <svg width="10" height="6" viewBox="0 0 10 6"><path d="M1 5l4-4 4 4" fill="none" stroke="#b2b5be" stroke-width="1.3"/></svg>`;
  }
}

class TvLogo extends HTMLElement {
  constructor() {
    super();
    this.attachShadow({ mode: 'open' });
    this.shadowRoot.innerHTML = `
      <style>
        :host { position: absolute; left: 11px; bottom: 12px; width: 34px; height: 34px; box-sizing: border-box; border: 1px solid #363a45;
                border-radius: 50%; background: #131722; display: flex; align-items: center; justify-content: center; }
      </style>
      <svg width="22" height="17" viewBox="0 0 36 28"><path fill="#fff" d="M14 22H7V11H0V4h14v18zM28 22h-8l7.5-18h8L28 22z"/><circle fill="#fff" cx="20" cy="8" r="4"/></svg>`;
  }
}

class TvPriceScale extends HTMLElement {
  constructor() {
    super();
    this.attachShadow({ mode: 'open' });
  }
  connectedCallback() {
    const top = +this.getAttribute('top');
    const height = +this.getAttribute('height');
    let html = '';
    const tick = (y, t) => `<span class="tick" style="top:${y - top}px">${t}</span>`;
    const tag = (y, t, cls) => `<span class="tag ${cls}" style="top:${y - top}px">${t}</span>`;
    if (this.getAttribute('kind') == 'macd') {
      [[684, '20.00'], [719, '10.00'], [754, '0.00'], [789, '−10.00'], [823, '−20.00'], [858, '−30.00']]
        .forEach(([y, t]) => html += tick(y, t));
    } else {
      [[7, '1,000.00'], [43, '980.00'], [78, '960.00'], [149, '920.00'], [184, '900.00'], [327, '820.00'], [362, '800.00'],
       [398, '780.00'], [433, '760.00'], [469, '740.00'], [504, '720.00'], [539, '700.00'], [575, '680.00'], [610, '660.00'], [646, '640.00']]
        .forEach(([y, t]) => html += tick(y, t));
      for (const [y, t, kind] of HLINES) html += tag(y, t, kind == 'y' ? 'yel' : 'wht');
      html += tag(486, '730.20', 'grn');
      html += `<span class="sym" style="top:${58 - top}px">SET50</span>`;
    }
    this.shadowRoot.innerHTML = `
      <style>
        :host { display: block; position: relative; width: 58px; height: ${height}px; box-sizing: border-box;
                border-left: 1px solid #c8c8c8; font: 10.8px/12px "Noto Sans", sans-serif; color: #b2b5be; }
        span { position: absolute; transform: translateY(-50%); white-space: nowrap; }
        .tick { left: 6px; }
        .tag { left: 0; width: 44px; height: 17px; line-height: 17px; padding-left: 7px; box-sizing: border-box; border-radius: 0 3px 3px 0; }
        .yel { background: #ffeb3b; color: #131722; }
        .wht { background: #ffffff; color: #131722; }
        .grn { background: #4e8a52; color: #ffffff; }
        .sym { right: 58px; height: 18px; padding: 0 5px; background: #434343; color: #d1d4dc; line-height: 18px; font-size: 11.3px; }
      </style>
      ${html}`;
  }
}

class TvTimeScale extends HTMLElement {
  constructor() {
    super();
    this.attachShadow({ mode: 'open' });
    const labels = [[66.5, 'Dec'], [161, '2024', 1], [276, 'Feb'], [381, 'Mar'], [491, 'Apr'], [586.5, 'May'], [691, 'Jun'], [791, 'Jul'],
      [901, 'Aug'], [1011, 'Sep'], [1121, 'Oct'], [1232, 'Nov'], [1342, 'Dec'], [1442, '2025', 1], [1557, 'Feb'], [1657, 'Mar'], [1767, 'Apr'], [1846, '25']];
    this.shadowRoot.innerHTML = `
      <style>
        :host { display: block; position: relative; width: 1849px; height: 25px; font: 10.8px/25px "Noto Sans", sans-serif; color: #b2b5be; }
        span { position: absolute; top: 0; transform: translateX(-50%); }
        .y { color: #d1d4dc; font-weight: 600; }
      </style>
      ${labels.map(([x, t, y]) => `<span class="${y ? 'y' : ''}" style="left:${x - 10}px">${t}</span>`).join('')}`;
  }
}

class TvScaleSettings extends HTMLElement {
  constructor() {
    super();
    this.attachShadow({ mode: 'open' });
    this.shadowRoot.innerHTML = `
      <style>
        :host { display: flex; width: 58px; height: 25px; box-sizing: border-box; border-left: 1px solid #c8c8c8;
                align-items: center; padding-left: 21px; }
      </style>
      <svg width="17" height="14" viewBox="0 0 17 14"><path d="M1 7l3.7-6h7.6L16 7l-3.7 6H4.7z" fill="none" stroke="#b2b5be" stroke-width="1"/><circle cx="8.5" cy="7" r="2" fill="none" stroke="#b2b5be" stroke-width="1"/></svg>`;
  }
}

customElements.define('tv-chart', TvChart);
customElements.define('tv-sidebar', TvSidebar);
customElements.define('tv-main-pane', TvMainPane);
customElements.define('tv-macd-pane', TvMacdPane);
customElements.define('tv-legend', TvLegend);
customElements.define('tv-row', TvRow);
customElements.define('tv-val', TvVal);
customElements.define('tv-collapse', TvCollapse);
customElements.define('tv-logo', TvLogo);
customElements.define('tv-price-scale', TvPriceScale);
customElements.define('tv-time-scale', TvTimeScale);
customElements.define('tv-scale-settings', TvScaleSettings);
</script>
</body>
</html>
